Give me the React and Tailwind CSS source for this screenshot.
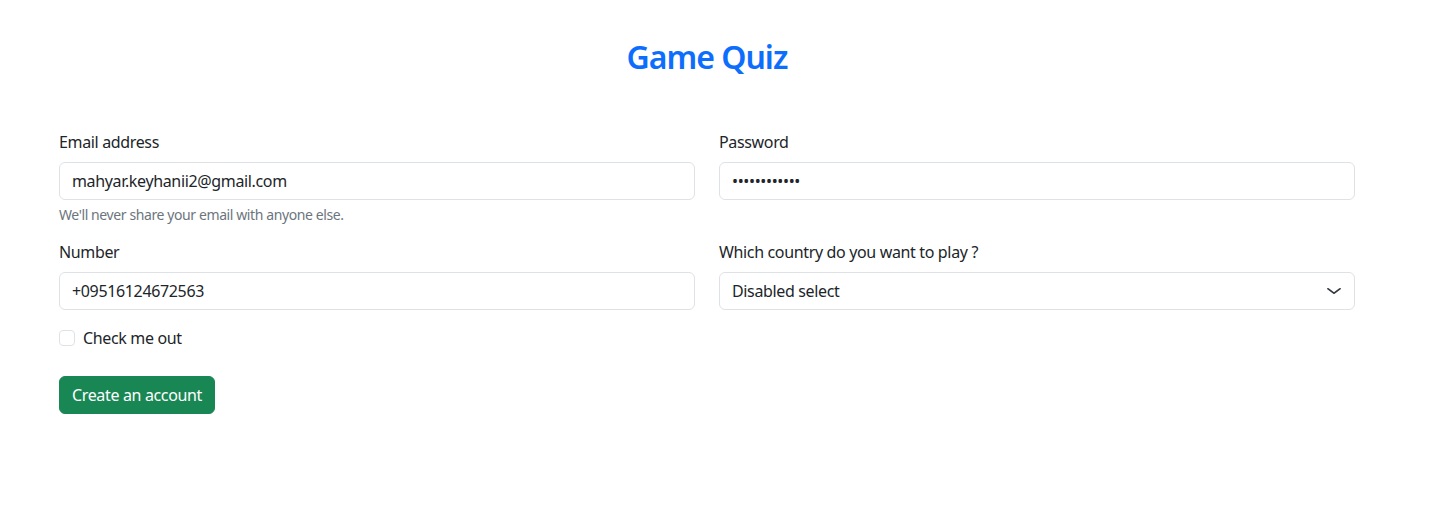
import React from "react";

const font = { fontFamily: '"Noto Sans", "Open Sans", sans-serif' };

export default function App() {
  return (
    <div className="w-[1414px] bg-white text-[#212529] text-[16px] leading-6 tracking-[-0.35px]" style={font}>
      <div className="w-[1296px] mx-auto pt-[38px]">
        <h1 className="text-center text-[32px] leading-[38px] font-semibold text-[#0d6efd] tracking-[-1px] mb-[54px]">
          Game Quiz
        </h1>
        <form className="grid grid-cols-2 gap-x-6">
          <div className="mb-[15px]">
            <label className="block mb-2">Email address</label>
            <input
              type="email"
              defaultValue="mahyar.keyhanii2@gmail.com"
              className="block w-full h-[38px] px-3 py-[6px] border border-[#dee2e6] rounded-[6px] outline-none text-[#212529] tracking-[-0.35px]"
            />
            <div className="mt-1 text-[14px] leading-[21px] text-[#6c757d] tracking-[-0.4px]">
              We'll never share your email with anyone else.
            </div>
          </div>
          <div className="mb-[15px]">
            <label className="block mb-2">Password</label>
            <input
              type="password"
              defaultValue="mahyarkeyhan"
              className="block w-full h-[38px] px-3 py-[6px] border border-[#dee2e6] rounded-[6px] outline-none text-[#212529]"
            />
          </div>
          <div className="mb-4">
            <label className="block mb-2">Number</label>
            <input
              type="text"
              defaultValue="+09516124672563"
              className="block w-full h-[38px] px-3 py-[6px] border border-[#dee2e6] rounded-[6px] outline-none text-[#212529] tracking-[-0.35px]"
            />
          </div>
          <div className="mb-4">
            <label className="block mb-2">Which country do you want to play ?</label>
            <div className="flex items-center justify-between h-[38px] pl-3 pr-3 border border-[#dee2e6] rounded-[6px]">
              <span>Disabled select</span>
              <svg width="16" height="12" viewBox="0 0 16 16" preserveAspectRatio="none" fill="none">
                <path d="M2 5l6 6 6-6" stroke="#343a40" strokeWidth="2" strokeLinecap="round" strokeLinejoin="round" />
              </svg>
            </div>
          </div>
          <div className="col-span-2 mb-4 flex items-center h-6">
            <span className="block w-4 h-4 border border-[#dee2e6] rounded-[4px] bg-white" />
            <span className="ml-2">Check me out</span>
          </div>
          <div className="col-span-2 mt-[10px]">
            <button
              type="button"
              className="h-[38px] px-3 rounded-[6px] bg-[#198754] text-white border border-[#198754]"
            >
              Create an account
            </button>
          </div>
        </form>
      </div>
    </div>
  );
}
